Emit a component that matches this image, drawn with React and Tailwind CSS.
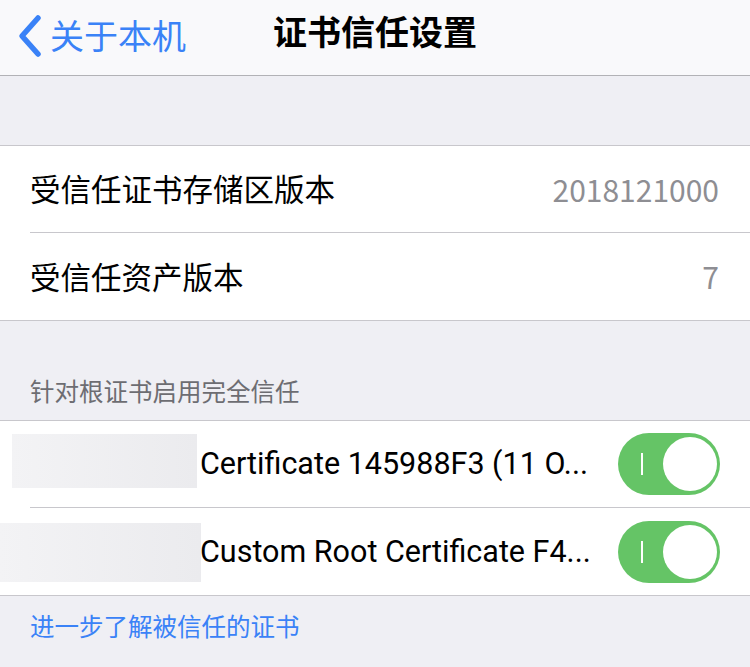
import React from 'react';

const cjk = { fontFamily: '"Noto Sans CJK SC", "Noto Sans", sans-serif' };

const Toggle = () => (
  <div className="relative w-[102px] h-[62px] rounded-full bg-[#65c466] shrink-0">
    <div className="absolute left-[23px] top-[20px] w-[2px] h-[22px] bg-white" />
    <div className="absolute right-[3px] top-[4px] w-[54px] h-[54px] rounded-full bg-white" />
  </div>
);

const InfoRow = ({ label, value, last }) => (
  <div className="flex h-[87px] pl-[30px]">
    <div className={`flex flex-1 items-center justify-between pr-[31px] ${last ? '' : 'border-b border-[#c8c7cc]'}`}>
      <span className="text-[30.5px] text-black" style={cjk}>{label}</span>
      <span className="text-[30px] text-[#8e8e93]" style={cjk}>{value}</span>
    </div>
  </div>
);

const CertRow = ({ name, blockClass, last }) => (
  <div className="relative h-[87px]">
    <div className={`absolute ${blockClass} bg-gradient-to-r from-[#f3f3f5] to-[#ebebee]`} />
    <div className={`flex h-full ml-[30px] items-center pl-[170px] pr-[30px] ${last ? '' : 'border-b border-[#c8c7cc]'}`}>
      <span className="relative flex-1 truncate text-[30.5px] text-black" style={{ fontFamily: 'Roboto, "Liberation Sans", sans-serif' }}>
        {name}
      </span>
      <div className="ml-[20px]">
        <Toggle />
      </div>
    </div>
  </div>
);

export default function App() {
  return (
    <div className="w-[750px] h-[667px] overflow-hidden bg-[#efeff4]" style={cjk}>
      <div className="relative h-[76px] bg-[#f9f9fb] border-b border-[#b2b2b6] flex items-center">
        <div className="flex items-center pl-[16px] text-[#3a82f7]">
          <svg width="28" height="44" viewBox="0 0 28 44" className="mr-[6px] mt-[-4px]">
            <path d="M22 4 L6 22 L22 40" fill="none" stroke="#3a82f7" strokeWidth="5.5" strokeLinecap="round" strokeLinejoin="round" />
          </svg>
          <span className="text-[34px] leading-none mt-[-6px]">关于本机</span>
        </div>
        <div className="absolute left-0 right-0 top-[14px] text-center text-[34px] font-bold text-black leading-none">
          证书信任设置
        </div>
      </div>

      <div className="h-[69px]" />

      <div className="bg-white border-y border-[#c8c7cc]">
        <InfoRow label="受信任证书存储区版本" value="2018121000" />
        <InfoRow label="受信任资产版本" value="7" last />
      </div>

      <div className="h-[99px] flex items-end pl-[30px] pb-[10px]">
        <span className="text-[24.5px] text-[#6d6d72]">针对根证书启用完全信任</span>
      </div>

      <div className="bg-white border-y border-[#c8c7cc]">
        <CertRow name="Certificate 145988F3 (11 O..." blockClass="left-[12px] top-[13px] w-[185px] h-[54px]" />
        <CertRow name="Custom Root Certificate F4..." blockClass="left-0 top-[15px] w-[201px] h-[59px]" last />
      </div>

      <div className="pl-[30px] pt-[12px]">
        <span className="text-[24.5px] text-[#3a82f7]">进一步了解被信任的证书</span>
      </div>
    </div>
  );
}
